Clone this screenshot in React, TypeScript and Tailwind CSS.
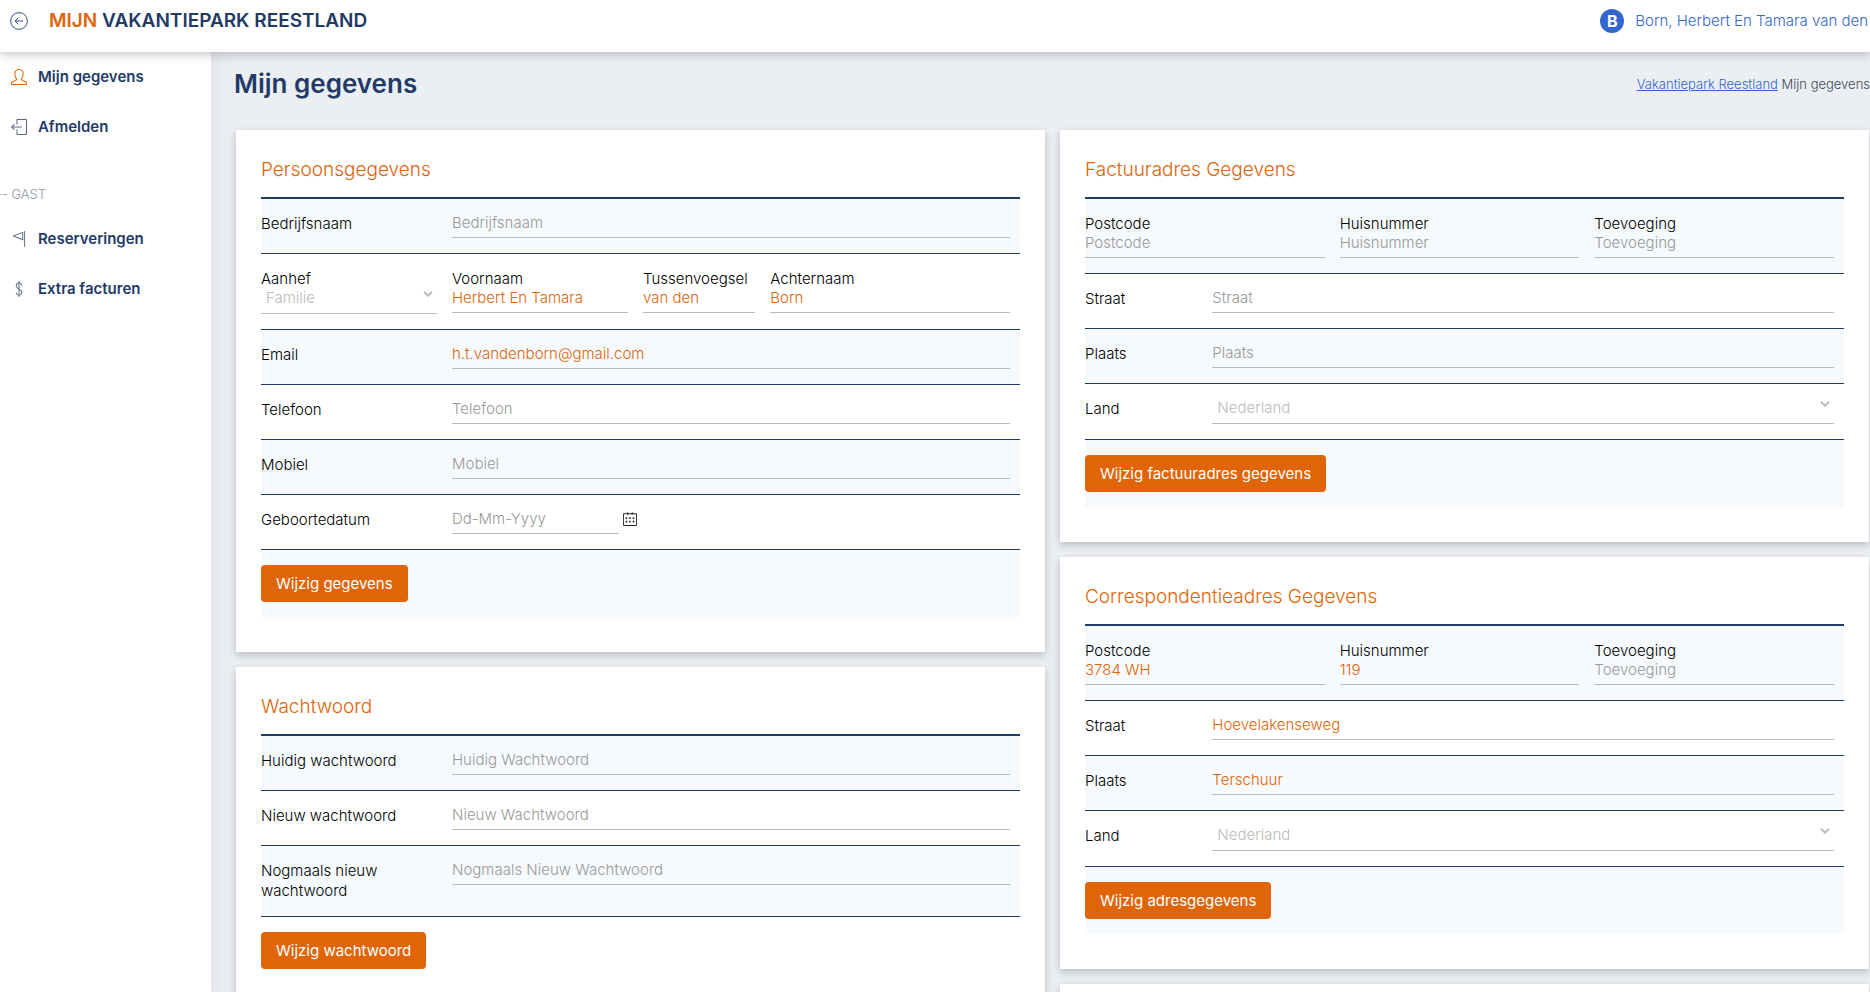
import React, { useId, useState } from 'react';
import clsx from 'clsx';
import { SlUser, SlLogout, SlCalender } from 'react-icons/sl';
import { TfiFlag, TfiMoney } from 'react-icons/tfi';

const NAV_MAIN = [
  { label: 'Mijn gegevens', icon: <SlUser className="size-4 text-[#e06508]" /> },
  { label: 'Afmelden', icon: <SlLogout className="size-4 text-[#5b6785]" /> },
];

const NAV_GUEST = [
  { label: 'Reserveringen', icon: <TfiFlag className="size-4 text-[#5b6785]" /> },
  { label: 'Extra facturen', icon: <TfiMoney className="size-4 text-[#5b6785]" /> },
];

const BackIcon = () => (
  <svg viewBox="0 0 18 18" className="size-[18px]" fill="none" stroke="#36507a" strokeWidth="1">
    <circle cx="9" cy="9" r="8.4" />
    <path d="M13.2 9H5M8.2 5.9 5 9l3.2 3.1" />
  </svg>
);

interface FieldProps {
  label: string;
  placeholder?: string;
  value?: string;
  type?: string;
}

const labelClass = 'block text-[15px] leading-5 font-light text-black';

const TextInput = ({ id, placeholder, value = '', type = 'text' }: Omit<FieldProps, 'label'> & { id: string }) => {
  const [text, setText] = useState(value);
  return (
    <input
      id={id}
      type={type}
      value={text}
      placeholder={placeholder}
      onChange={(e) => setText(e.target.value)}
      className="block h-6 w-full border-b border-[#bbbbbb] bg-transparent pb-1.5 text-[15px] leading-[17px] font-light text-[#e06508] outline-none placeholder:text-[#999999]"
    />
  );
};

const SelectInput = ({ id, options }: { id: string; options: string[] }) => (
  <div className="relative">
    <select
      id={id}
      className="block h-[25px] w-full appearance-none border-b border-[#bbbbbb] bg-transparent pb-[7px] pl-[5px] text-[15px] leading-[17px] font-light text-[#bbbbbb] outline-none"
    >
      {options.map((option) => (
        <option key={option}>{option}</option>
      ))}
    </select>
    <svg
      viewBox="0 0 10 6"
      className="pointer-events-none absolute top-0.5 right-1 h-1.5 w-2.5"
      fill="none"
      stroke="#bbbbbb"
      strokeWidth="2"
    >
      <path d="M1 0.8 5 4.6 9 0.8" />
    </svg>
  </div>
);

const Row = ({ shaded = false, last = false, children }: { shaded?: boolean; last?: boolean; children: React.ReactNode }) => (
  <div
    className={clsx(
      'grid grid-cols-12 gap-x-[15px] py-[15px] pr-2.5',
      shaded && 'bg-[#f6fafd]',
      !last && 'border-b border-[#223a66]'
    )}
  >
    {children}
  </div>
);

// Label left of the field
const InlineField = ({ label, wide = false, ...input }: FieldProps & { wide?: boolean }) => {
  const id = useId();
  return (
    <>
      <label htmlFor={id} className={clsx(labelClass, wide ? 'col-span-2' : 'col-span-3')}>
        {label}
      </label>
      <div className={wide ? 'col-span-10' : 'col-span-9'}>
        <TextInput id={id} {...input} />
      </div>
    </>
  );
};

// Label above the field
const StackedField = ({ label, span, ...input }: FieldProps & { span: string }) => {
  const id = useId();
  return (
    <div className={span}>
      <label htmlFor={id} className={labelClass}>
        {label}
      </label>
      <TextInput id={id} {...input} />
    </div>
  );
};

const SubmitRow = ({ label, shaded = false }: { label: string; shaded?: boolean }) => (
  <Row shaded={shaded} last>
    <div className="col-span-12">
      <button
        type="submit"
        className="block h-[37px] rounded bg-[#e06508] px-[15px] text-[15px] leading-5 text-white hover:bg-[#c95a07]"
      >
        {label}
      </button>
    </div>
  </Row>
);

const Card = ({ title, children }: { title: string; children: React.ReactNode }) => (
  <section className="bg-white px-[25px] pt-[25px] pb-[35px] shadow-[0_3px_8px_rgba(0,0,0,0.22)]">
    <h2 className="border-b-2 border-[#223a66] pt-0.5 pb-3.5 text-[19px] leading-[26px] font-light text-[#e06508]">{title}</h2>
    <form onSubmit={(e) => e.preventDefault()}>{children}</form>
  </section>
);

interface Address {
  postcode?: string;
  huisnummer?: string;
  straat?: string;
  plaats?: string;
}

const AddressCard = ({ title, button, address = {} }: { title: string; button: string; address?: Address }) => {
  const countryId = useId();
  return (
    <Card title={title}>
      <Row shaded>
        <StackedField span="col-span-4" label="Postcode" placeholder="Postcode" value={address.postcode} />
        <StackedField span="col-span-4" label="Huisnummer" placeholder="Huisnummer" value={address.huisnummer} />
        <StackedField span="col-span-4" label="Toevoeging" placeholder="Toevoeging" />
      </Row>
      <Row>
        <InlineField wide label="Straat" placeholder="Straat" value={address.straat} />
      </Row>
      <Row shaded>
        <InlineField wide label="Plaats" placeholder="Plaats" value={address.plaats} />
      </Row>
      <Row>
        <label htmlFor={countryId} className={clsx(labelClass, 'col-span-2')}>
          Land
        </label>
        <div className="col-span-10">
          <SelectInput id={countryId} options={['Nederland']} />
        </div>
      </Row>
      <SubmitRow shaded label={button} />
    </Card>
  );
};

const PersonCard = () => (
  <Card title="Persoonsgegevens">
    <Row shaded>
      <InlineField label="Bedrijfsnaam" placeholder="Bedrijfsnaam" />
    </Row>
    <Row>
      <div className="col-span-3">
        <label htmlFor="aanhef" className={labelClass}>
          Aanhef
        </label>
        <SelectInput id="aanhef" options={['Familie']} />
      </div>
      <StackedField span="col-span-3" label="Voornaam" value="Herbert En Tamara" />
      <StackedField span="col-span-2" label="Tussenvoegsel" value="van den" />
      <StackedField span="col-span-4" label="Achternaam" value="Born" />
    </Row>
    <Row shaded>
      <InlineField label="Email" value="h.t.vandenborn@gmail.com" type="email" />
    </Row>
    <Row>
      <InlineField label="Telefoon" placeholder="Telefoon" type="tel" />
    </Row>
    <Row shaded>
      <InlineField label="Mobiel" placeholder="Mobiel" type="tel" />
    </Row>
    <Row>
      <label htmlFor="geboortedatum" className={clsx(labelClass, 'col-span-3')}>
        Geboortedatum
      </label>
      <div className="col-span-9 flex items-start gap-1">
        <div className="w-[167px]">
          <TextInput id="geboortedatum" placeholder="Dd-Mm-Yyyy" />
        </div>
        <button type="button" className="pt-0.5 text-[#222222]">
          <SlCalender className="size-[14px]" />
        </button>
      </div>
    </Row>
    <SubmitRow shaded label="Wijzig gegevens" />
  </Card>
);

const PasswordCard = () => (
  <Card title="Wachtwoord">
    <Row shaded>
      <InlineField label="Huidig wachtwoord" placeholder="Huidig Wachtwoord" type="password" />
    </Row>
    <Row>
      <InlineField label="Nieuw wachtwoord" placeholder="Nieuw Wachtwoord" type="password" />
    </Row>
    <Row shaded>
      <InlineField label="Nogmaals nieuw wachtwoord" placeholder="Nogmaals Nieuw Wachtwoord" type="password" />
    </Row>
    <SubmitRow label="Wijzig wachtwoord" />
  </Card>
);

const NavItem = ({ label, icon }: { label: string; icon: React.ReactNode }) => (
  <li>
    <a href="#" className="flex h-[50px] items-center gap-[11px] pl-[11px] text-[15px] font-semibold text-[#223a66]">
      {icon}
      <span>{label}</span>
    </a>
  </li>
);

const App = () => {
  return (
    <div className="flex h-screen flex-col overflow-hidden bg-[#ebeff4] font-['Inter',sans-serif]">
      <header className="relative z-10 flex h-[52px] shrink-0 items-center justify-between bg-white pr-0.5 pb-2.5 pl-2.5 shadow-[0_2px_10px_rgba(0,0,0,0.25)]">
        <div className="flex items-center gap-[21px]">
          <a href="#">
            <BackIcon />
          </a>
          <span className="text-[19px] leading-6 font-semibold text-[#223a66]">
            <span className="text-[#e06508]">MIJN</span> VAKANTIEPARK REESTLAND
          </span>
        </div>
        <a href="#" className="flex items-center gap-[11px] text-[15px] font-light text-[#3366cc]">
          <span className="flex size-6 items-center justify-center rounded-full bg-[#3366cc] text-base font-bold text-white">B</span>
          <span>Born, Herbert En Tamara van den</span>
        </a>
      </header>

      <div className="flex min-h-0 flex-1">
        <nav className="w-[211px] shrink-0 bg-white shadow-[1px_0_20px_rgba(0,0,0,0.08)]">
          <ul>
            {NAV_MAIN.map((item) => (
              <NavItem key={item.label} {...item} />
            ))}
          </ul>
          <p className="-ml-1 pt-8 pb-2.5 text-[13px] leading-5 font-light text-[#8d97ad]">-- GAST</p>
          <ul>
            {NAV_GUEST.map((item) => (
              <NavItem key={item.label} {...item} />
            ))}
          </ul>
        </nav>

        <main className="min-w-0 flex-1 pl-[23px]">
          <div className="flex h-[78px] items-start justify-between pt-4">
            <h1 className="text-[26px] leading-8 font-semibold text-[#223a66]">Mijn gegevens</h1>
            <p className="text-[13px] leading-8 font-light text-[#3c4858]">
              <a href="#" className="text-[#3366cc] underline">
                Vakantiepark Reestland
              </a>{' '}
              Mijn gegevens
            </p>
          </div>
          <div className="grid grid-cols-2 gap-[15px] pr-px pl-0.5">
            <div className="flex flex-col gap-[15px]">
              <PersonCard />
              <PasswordCard />
            </div>
            <div className="flex flex-col gap-[15px]">
              <AddressCard title="Factuuradres Gegevens" button="Wijzig factuuradres gegevens" />
              <AddressCard
                title="Correspondentieadres Gegevens"
                button="Wijzig adresgegevens"
                address={{ postcode: '3784 WH', huisnummer: '119', straat: 'Hoevelakenseweg', plaats: 'Terschuur' }}
              />
              <section className="h-20 bg-white shadow-[0_3px_8px_rgba(0,0,0,0.22)]" />
            </div>
          </div>
        </main>
      </div>
    </div>
  );
};

export default App;
